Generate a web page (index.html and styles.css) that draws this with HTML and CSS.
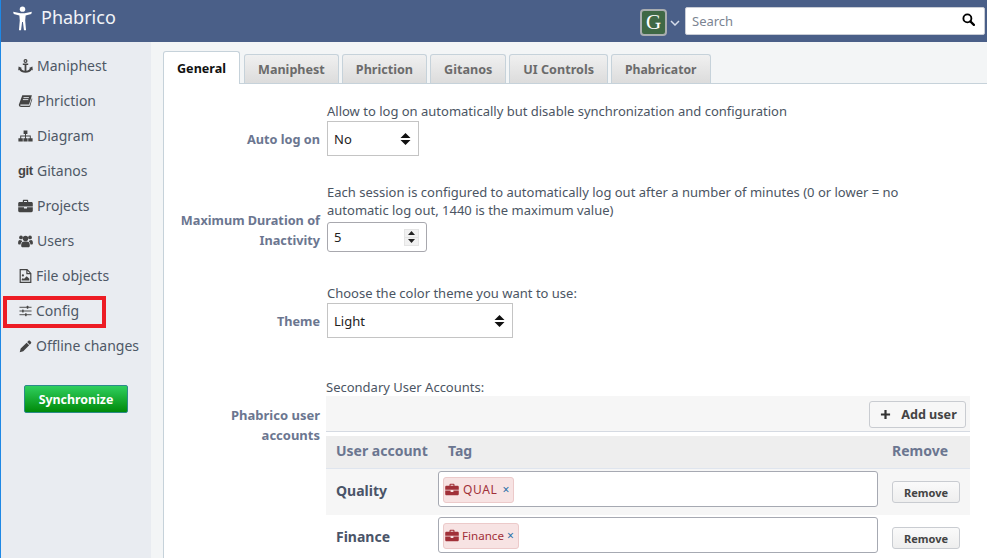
FILE: index.html
```html
<!DOCTYPE html>
<html lang="en">
<head>
<meta charset="utf-8">
<title>Phabrico</title>
<link rel="stylesheet" href="styles.css">
</head>
<body>
<div class="page">
  <header class="topbar">
    <a class="brand">
      <svg class="brand-logo" viewBox="0 0 20 24"><circle cx="10" cy="3" r="2.6"/><path d="M1 5.6 L1.6 7.6 L7 9.2 L7.4 14 L6.6 23.4 L8.6 23.4 L9.6 15.4 L10.4 15.4 L11.4 23.4 L13.4 23.4 L12.6 14 L13 9.2 L18.4 7.6 L19 5.6 L12 7 L8 7 Z"/></svg>
      <span class="brand-name">Phabrico</span>
    </a>
    <div class="topbar-right">
      <span class="avatar">G</span>
      <svg class="chev" viewBox="0 0 10 6"><path d="M1 1 L5 5 L9 1" fill="none" stroke="#d5dcea" stroke-width="1.5"/></svg>
      <div class="search">
        <span>Search</span>
        <svg viewBox="0 0 14 14"><circle cx="5.8" cy="5.8" r="4.3" fill="none" stroke="#000" stroke-width="2"/><path d="M9 9 L12.8 12.8" stroke="#000" stroke-width="2.4" stroke-linecap="round"/></svg>
      </div>
    </div>
  </header>
  <div class="layout">
    <nav class="sidebar">
      <a class="nav-item"><svg class="ico" viewBox="0 0 15 14"><circle cx="7.5" cy="2" r="1.4" fill="none" stroke="#444" stroke-width="1.2"/><path d="M4.8 4.6 H10.2 V5.9 H8.4 V11.8 C10 11.6 11.4 10.8 12 9.6 L11 9 L14.4 7.6 L14.8 11.4 L13.8 10.8 C12.8 12.6 10.2 13.8 7.5 13.8 C4.8 13.8 2.2 12.6 1.2 10.8 L0.2 11.4 L0.6 7.6 L4 9 L3 9.6 C3.6 10.8 5 11.6 6.6 11.8 V5.9 H4.8 Z"/></svg><span>Maniphest</span></a>
      <a class="nav-item"><svg class="ico" viewBox="0 0 14 14"><path d="M3.8 1.2 H13.4 L10.6 10.4 H2.6 C1.8 10.4 1.6 11 1.9 11.4 C2.2 11.8 2.6 11.8 3 11.8 H11 L13.4 4 L13.8 5 L11.6 12.6 C11.4 13 11.1 13 10.8 13 H2.6 C1.4 13 .4 12.2 .3 10.8 Z"/><path d="M5 3.6 H10.4 M4.4 5.6 H9.8" stroke="#e9ecf1" stroke-width=".9"/></svg><span>Phriction</span></a>
      <a class="nav-item"><svg class="ico" viewBox="0 0 15 14"><path d="M5.6 1.5 H9.4 V5 H8 V6.4 H12.8 V9.2 H14.6 V12.6 H10.2 V9.2 H11.8 V7.4 H8 V9.2 H9.6 V12.6 H5.4 V9.2 H7 V7.4 H3.2 V9.2 H4.8 V12.6 H.4 V9.2 H2.2 V6.4 H7 V5 H5.6 Z"/></svg><span>Diagram</span></a>
      <a class="nav-item"><span class="git-ico">git</span><span>Gitanos</span></a>
      <a class="nav-item"><svg class="ico" viewBox="0 0 15 14"><path d="M4.8 3 V1.8 C4.8 1.2 5.2 .8 5.8 .8 H9.2 C9.8 .8 10.2 1.2 10.2 1.8 V3 H13.4 C14.2 3 14.8 3.6 14.8 4.4 V7.4 H.2 V4.4 C.2 3.6 .8 3 1.6 3 Z M6 3 H9 V2 H6 Z M.2 8.2 H6 V9.6 H9 V8.2 H14.8 V11.8 C14.8 12.6 14.2 13.2 13.4 13.2 H1.6 C.8 13.2 .2 12.6 .2 11.8 Z" fill-rule="evenodd"/></svg><span>Projects</span></a>
      <a class="nav-item"><svg class="ico" viewBox="0 0 16 14"><circle cx="8" cy="4.4" r="2.9"/><circle cx="3.2" cy="3.2" r="2"/><circle cx="12.8" cy="3.2" r="2"/><path d="M4.4 8.2 C5 7.6 6 7.4 8 7.4 C10 7.4 11 7.6 11.6 8.2 C12.4 9 12.6 10.6 12.6 12 C12.6 13 12 13.6 11 13.6 H5 C4 13.6 3.4 13 3.4 12 C3.4 10.6 3.6 9 4.4 8.2 Z M.1 9.2 C.1 7 .8 5.8 2 5.8 C2.6 6.2 3 6.3 3.6 6.3 C3.9 7 4.3 7.3 4.6 7.4 C3.4 8 2.8 9.2 2.7 10.8 H1.2 C.5 10.8 .1 10.2 .1 9.2 Z M15.9 9.2 C15.9 7 15.2 5.8 14 5.8 C13.4 6.2 13 6.3 12.4 6.3 C12.1 7 11.7 7.3 11.4 7.4 C12.6 8 13.2 9.2 13.3 10.8 H14.8 C15.5 10.8 15.9 10.2 15.9 9.2 Z"/></svg><span>Users</span></a>
      <a class="nav-item nav-file"><svg class="ico" viewBox="0 0 12 14"><path d="M.7 .7 H7.6 L11.3 4.4 V13.3 H.7 Z M7.4 .9 V4.6 H11" fill="none" stroke="#444" stroke-width="1.2"/><circle cx="3.4" cy="6.4" r="1.1"/><path d="M2.2 11.6 V10.2 L3.4 9 L4.4 10 L7.2 7.2 L9.8 9.8 V11.6 Z"/></svg><span>File objects</span></a>
      <a class="nav-item nav-file nav-marked"><svg class="ico" viewBox="0 0 14 14"><path d="M.5 3 H13.5 M.5 7 H13.5 M.5 11 H13.5" stroke="#444" stroke-width="1"/><rect x="8.4" y="1.4" width="1.6" height="3.2" rx=".4"/><rect x="3.4" y="5.4" width="1.6" height="3.2" rx=".4"/><rect x="6.6" y="9.4" width="1.6" height="3.2" rx=".4"/></svg><span>Config</span></a>
      <a class="nav-item nav-file"><svg class="ico" viewBox="0 0 14 14"><path d="M10 1.6 C10.6 1 11.2 1 11.8 1.4 L13 2.6 C13.4 3.2 13.4 3.8 12.8 4.4 L11.6 5.6 L8.8 2.8 Z M8.2 3.4 L11 6.2 L4.6 12.6 L.8 13.6 L1.8 9.8 Z"/></svg><span>Offline changes</span></a>
      <a class="sync">Synchronize</a>
    </nav>
    <main class="main">
      <div class="tabs">
        <a class="tab tab-active">General</a>
        <a class="tab">Maniphest</a>
        <a class="tab">Phriction</a>
        <a class="tab">Gitanos</a>
        <a class="tab">UI Controls</a>
        <a class="tab tab-last">Phabricator</a>
      </div>
      <section class="pane">
        <div class="row row-one">
          <label class="lbl">Auto log on</label>
          <p class="hint">Allow to log on automatically but disable synchronization and configuration</p>
          <div class="select select-auto"><span>No</span>
            <svg class="updown" viewBox="0 0 11 14"><path d="M5.5 1 L10.5 6 H.5 Z M5.5 13 L.5 8 H10.5 Z"/></svg></div>
        </div>
        <div class="row row-two">
          <label class="lbl">Maximum Duration of Inactivity</label>
          <p class="hint">Each session is configured to automatically log out after a number of minutes (0 or lower = no automatic log out, 1440 is the maximum value)</p>
          <div class="number"><span>5</span>
            <span class="spin"><i class="spin-up"></i><i class="spin-down"></i></span></div>
        </div>
        <div class="row row-three">
          <label class="lbl">Theme</label>
          <p class="hint">Choose the color theme you want to use:</p>
          <div class="select select-theme"><span>Light</span>
            <svg class="updown" viewBox="0 0 11 14"><path d="M5.5 1 L10.5 6 H.5 Z M5.5 13 L.5 8 H10.5 Z"/></svg></div>
        </div>
        <div class="row row-four">
          <label class="lbl lbl-users">Phabrico user accounts</label>
          <p class="hint hint-users">Secondary User Accounts:</p>
          <div class="accounts">
            <div class="toolbar">
              <a class="add-btn"><svg viewBox="0 0 12 12"><path d="M6 1 V11 M1 6 H11" stroke="#333" stroke-width="2.4"/></svg>Add user</a>
            </div>
            <div class="acc-row acc-head"><span>User account</span><span>Tag</span><span class="acc-remove-cell">Remove</span></div>
            <div class="acc-row acc-odd">
              <strong>Quality</strong>
              <div class="tag-input"><span class="tag tag-qual"><svg viewBox="0 0 15 14"><path d="M4.8 3 V1.8 C4.8 1.2 5.2 .8 5.8 .8 H9.2 C9.8 .8 10.2 1.2 10.2 1.8 V3 H13.4 C14.2 3 14.8 3.6 14.8 4.4 V7.4 H.2 V4.4 C.2 3.6 .8 3 1.6 3 Z M6 3 H9 V2 H6 Z M.2 8.2 H6 V9.6 H9 V8.2 H14.8 V11.8 C14.8 12.6 14.2 13.2 13.4 13.2 H1.6 C.8 13.2 .2 12.6 .2 11.8 Z" fill-rule="evenodd"/></svg>QUAL<b>×</b></span></div>
              <div class="acc-remove-cell"><a class="rm-btn">Remove</a></div>
            </div>
            <div class="acc-row">
              <strong>Finance</strong>
              <div class="tag-input"><span class="tag tag-fin"><svg viewBox="0 0 15 14"><path d="M4.8 3 V1.8 C4.8 1.2 5.2 .8 5.8 .8 H9.2 C9.8 .8 10.2 1.2 10.2 1.8 V3 H13.4 C14.2 3 14.8 3.6 14.8 4.4 V7.4 H.2 V4.4 C.2 3.6 .8 3 1.6 3 Z M6 3 H9 V2 H6 Z M.2 8.2 H6 V9.6 H9 V8.2 H14.8 V11.8 C14.8 12.6 14.2 13.2 13.4 13.2 H1.6 C.8 13.2 .2 12.6 .2 11.8 Z" fill-rule="evenodd"/></svg>Finance<b>×</b></span></div>
              <div class="acc-remove-cell"><a class="rm-btn">Remove</a></div>
            </div>
          </div>
        </div>
      </section>
    </main>
  </div>
</div>
</body>
</html>
```
FILE: styles.css
```css
*, *::before, *::after { box-sizing: border-box; }
html, body { margin: 0; height: 100%; overflow: hidden; }
body { font-family: "Noto Sans", "Open Sans", sans-serif; font-size: 13px; color: #4b5563; background: #f3f5f6; }
.page { height: 558px; overflow: hidden; display: flex; flex-direction: column; border-left: 1px solid #1e88e5; }
a { text-decoration: none; }

.topbar { height: 42px; flex: none; background: #4a5f88; display: flex; align-items: center; justify-content: space-between; padding: 0 2px 0 11px; }
.brand { display: flex; align-items: center; gap: 8px; color: #f2f4f8; font-size: 18px; margin-top: -5px; }
.brand-logo { width: 21px; height: 25px; fill: #fff; }
.brand-name { margin-top: -3px; }
.topbar-right { display: flex; align-items: center; }
.avatar { width: 27px; height: 27px; background: #3f6845; border: 2px solid #a9adb0; border-radius: 4px; color: #fff; font-family: "Liberation Serif", serif; font-size: 21px; font-weight: 400; display: flex; align-items: center; justify-content: center; margin-top: 2px; }
.chev { width: 10px; height: 6px; margin: 4px 5px 0 3px; }
.search { width: 300px; height: 28px; background: #fff; border: 1px solid #c9cdd6; border-radius: 2px; padding: 0 9px 0 6px; display: flex; align-items: center; justify-content: space-between; color: #7b8492; font-size: 13px; }
.search svg { width: 13px; height: 13px; margin-top: -3px; }

.layout { flex: 1; display: flex; min-height: 0; }
.sidebar { width: 150px; flex: none; background: #e9ecf1; padding: 6px 0 0; display: flex; flex-direction: column; }
.nav-item { height: 35px; padding-left: 17px; display: flex; align-items: center; gap: 4px; color: #4e5866; font-size: 14px; position: relative; }
.nav-file { padding-left: 18px; }
.nav-item .ico { width: 15px; height: 14px; fill: #444; flex: none; }
.nav-file .ico { width: 13px; }
.git-ico { width: 15px; font-weight: 700; font-size: 13px; color: #444; line-height: 14px; letter-spacing: -.4px; font-family: "Liberation Sans", sans-serif; }
.nav-marked::after { content: ""; position: absolute; left: 2px; top: 3px; width: 103px; height: 32px; border: 4.5px solid #ed1c24; }
.sync { margin: 22px 0 0 23px; width: 104px; height: 28px; display: flex; align-items: center; justify-content: center; color: #fff; font-weight: 700; font-size: 12.4px; border: 1px solid #2c8a8a; border-radius: 2px; background: linear-gradient(#2fcf5e, #008a0a); }

.main { flex: 1; min-width: 0; padding-top: 9px; display: flex; flex-direction: column; margin-left: 12px; }
.tabs { display: flex; align-items: flex-end; gap: 3px; height: 33px; position: relative; z-index: 1; }
.tab { height: 29px; padding: 0 13px; display: flex; align-items: center; font-weight: 700; font-size: 12.6px; color: #6b6b6b; border: 1px solid #c6d2da; border-bottom: 0; border-radius: 3px 3px 0 0; background: linear-gradient(#f0f0f0, #dcdcdc); }
.tab-active { height: 33px; margin-bottom: -1px; background: #fff; color: #111; margin-right: 1px; }
.tab-last { font-size: 12.2px; }
.pane { flex: 1; background: #fff; border: 1px solid #c6d2da; border-width: 1px 0 0 1px; padding: 18px 0 0 10px; }

.row { display: grid; grid-template-columns: 146px 1fr; column-gap: 7px; align-items: start; }
.row-two { margin-top: 27px; }
.row-three { margin-top: 32px; }
.row-four { margin-top: 40px; }
.lbl { grid-column: 1; grid-row: 1 / span 2; align-self: end; text-align: right; font-weight: 700; font-size: 12.7px; line-height: 20px; color: #6b7690; padding-bottom: 7px; }
.row-two .lbl { padding-bottom: 2px; }
.lbl-users { align-self: start; padding: 27px 0 0; font-size: 13px; }
.hint { grid-column: 2; margin: 0 17px 0 0; line-height: 18px; color: #4b5563; font-size: 13px; }
.row-one .hint { margin-bottom: 1px; }
.row-two .hint { margin-bottom: 3px; margin-right: 60px; }
.row-three .hint { margin-bottom: 1px; }
.hint-users { margin-left: -1px; }
.select { grid-column: 2; height: 35px; border: 1px solid #c4c4c4; background: #fff; color: #222; padding: 0 7px 0 6px; display: flex; align-items: center; justify-content: space-between; font-size: 13px; }
.select-auto { width: 92px; }
.select-theme { width: 186px; }
.updown { width: 11px; height: 14px; fill: #111; }
.number { grid-column: 2; width: 100px; height: 30px; border: 1px solid #a8a8ae; border-radius: 3px; background: #fff; color: #222; padding: 0 7px 0 6px; display: flex; align-items: center; justify-content: space-between; }
.spin { width: 15px; height: 17px; display: flex; flex-direction: column; background: #e4e4e4; padding: 1px; gap: 1px; }
.spin i { flex: 1; background: #f1f1f1; position: relative; display: block; }
.spin i::after { content: ""; position: absolute; left: 3px; width: 7px; height: 4px; background: #222; }
.spin-up::after { top: 1.5px; clip-path: polygon(50% 0, 100% 100%, 0 100%); }
.spin-down::after { top: 1.5px; clip-path: polygon(0 0, 100% 0, 50% 100%); }

.accounts { grid-column: 2; width: 644px; margin-left: -1px; }
.toolbar { height: 36px; background: #f6f6f6; border-bottom: 1px solid #d5dae2; padding: 5px 4px 0 0; display: flex; justify-content: flex-end; align-items: flex-start; }
.add-btn { width: 97px; height: 27px; padding-left: 2px; background: #f7f7f7; border: 1px solid #c9ccd1; border-radius: 3px; display: flex; align-items: center; justify-content: center; gap: 10px; color: #444; font-weight: 700; font-size: 12.6px; }
.add-btn svg { width: 11px; height: 11px; }
.acc-row { display: grid; grid-template-columns: 112px 440px 92px; align-items: center; min-height: 46px; color: #4a5468; font-size: 14px; }
.acc-row strong { padding: 0 0 3px 10px; font-weight: 700; }
.acc-head { margin-top: 4px; min-height: 33px; padding-bottom: 3px; background: #eeeeee; border-bottom: 1px solid #dfe5ee; color: #6b7690; font-weight: 700; font-size: 14px; }
.acc-head span:first-child { padding-left: 10px; }
.acc-head span:nth-child(2) { padding-left: 10px; }
.acc-odd { background: #f6f6f6; }
.acc-remove-cell { padding-left: 14px; }
.tag-input { height: 36px; background: #fff; border: 1px solid #a6a9b2; border-radius: 3px; padding: 5px 4px; margin-bottom: 7px; }
.tag { display: inline-flex; align-items: center; height: 26px; padding: 0 4px 0 1px; background: #f7e3e3; border: 1px solid #eccaca; border-radius: 3px; color: #a13038; font-size: 12px; line-height: 1; }
.tag svg { width: 14px; height: 13px; fill: #a13038; margin-right: 4px; margin-top: -1px; flex: none; }
.tag-qual { letter-spacing: .6px; }
.tag-fin { font-size: 11.6px; }
.tag-fin svg { margin-right: 3px; }
.tag b { font-weight: 400; color: #2a6fa8; margin-left: 5px; letter-spacing: 0; font-size: 12px; }
.tag-fin b { margin-left: 3px; }
.rm-btn { width: 68px; height: 22px; background: linear-gradient(#fafafa, #eeeeee); border: 1px solid #c9ccd1; border-radius: 3px; display: flex; align-items: center; justify-content: center; color: #444; font-size: 11px; font-weight: 700; }
```
